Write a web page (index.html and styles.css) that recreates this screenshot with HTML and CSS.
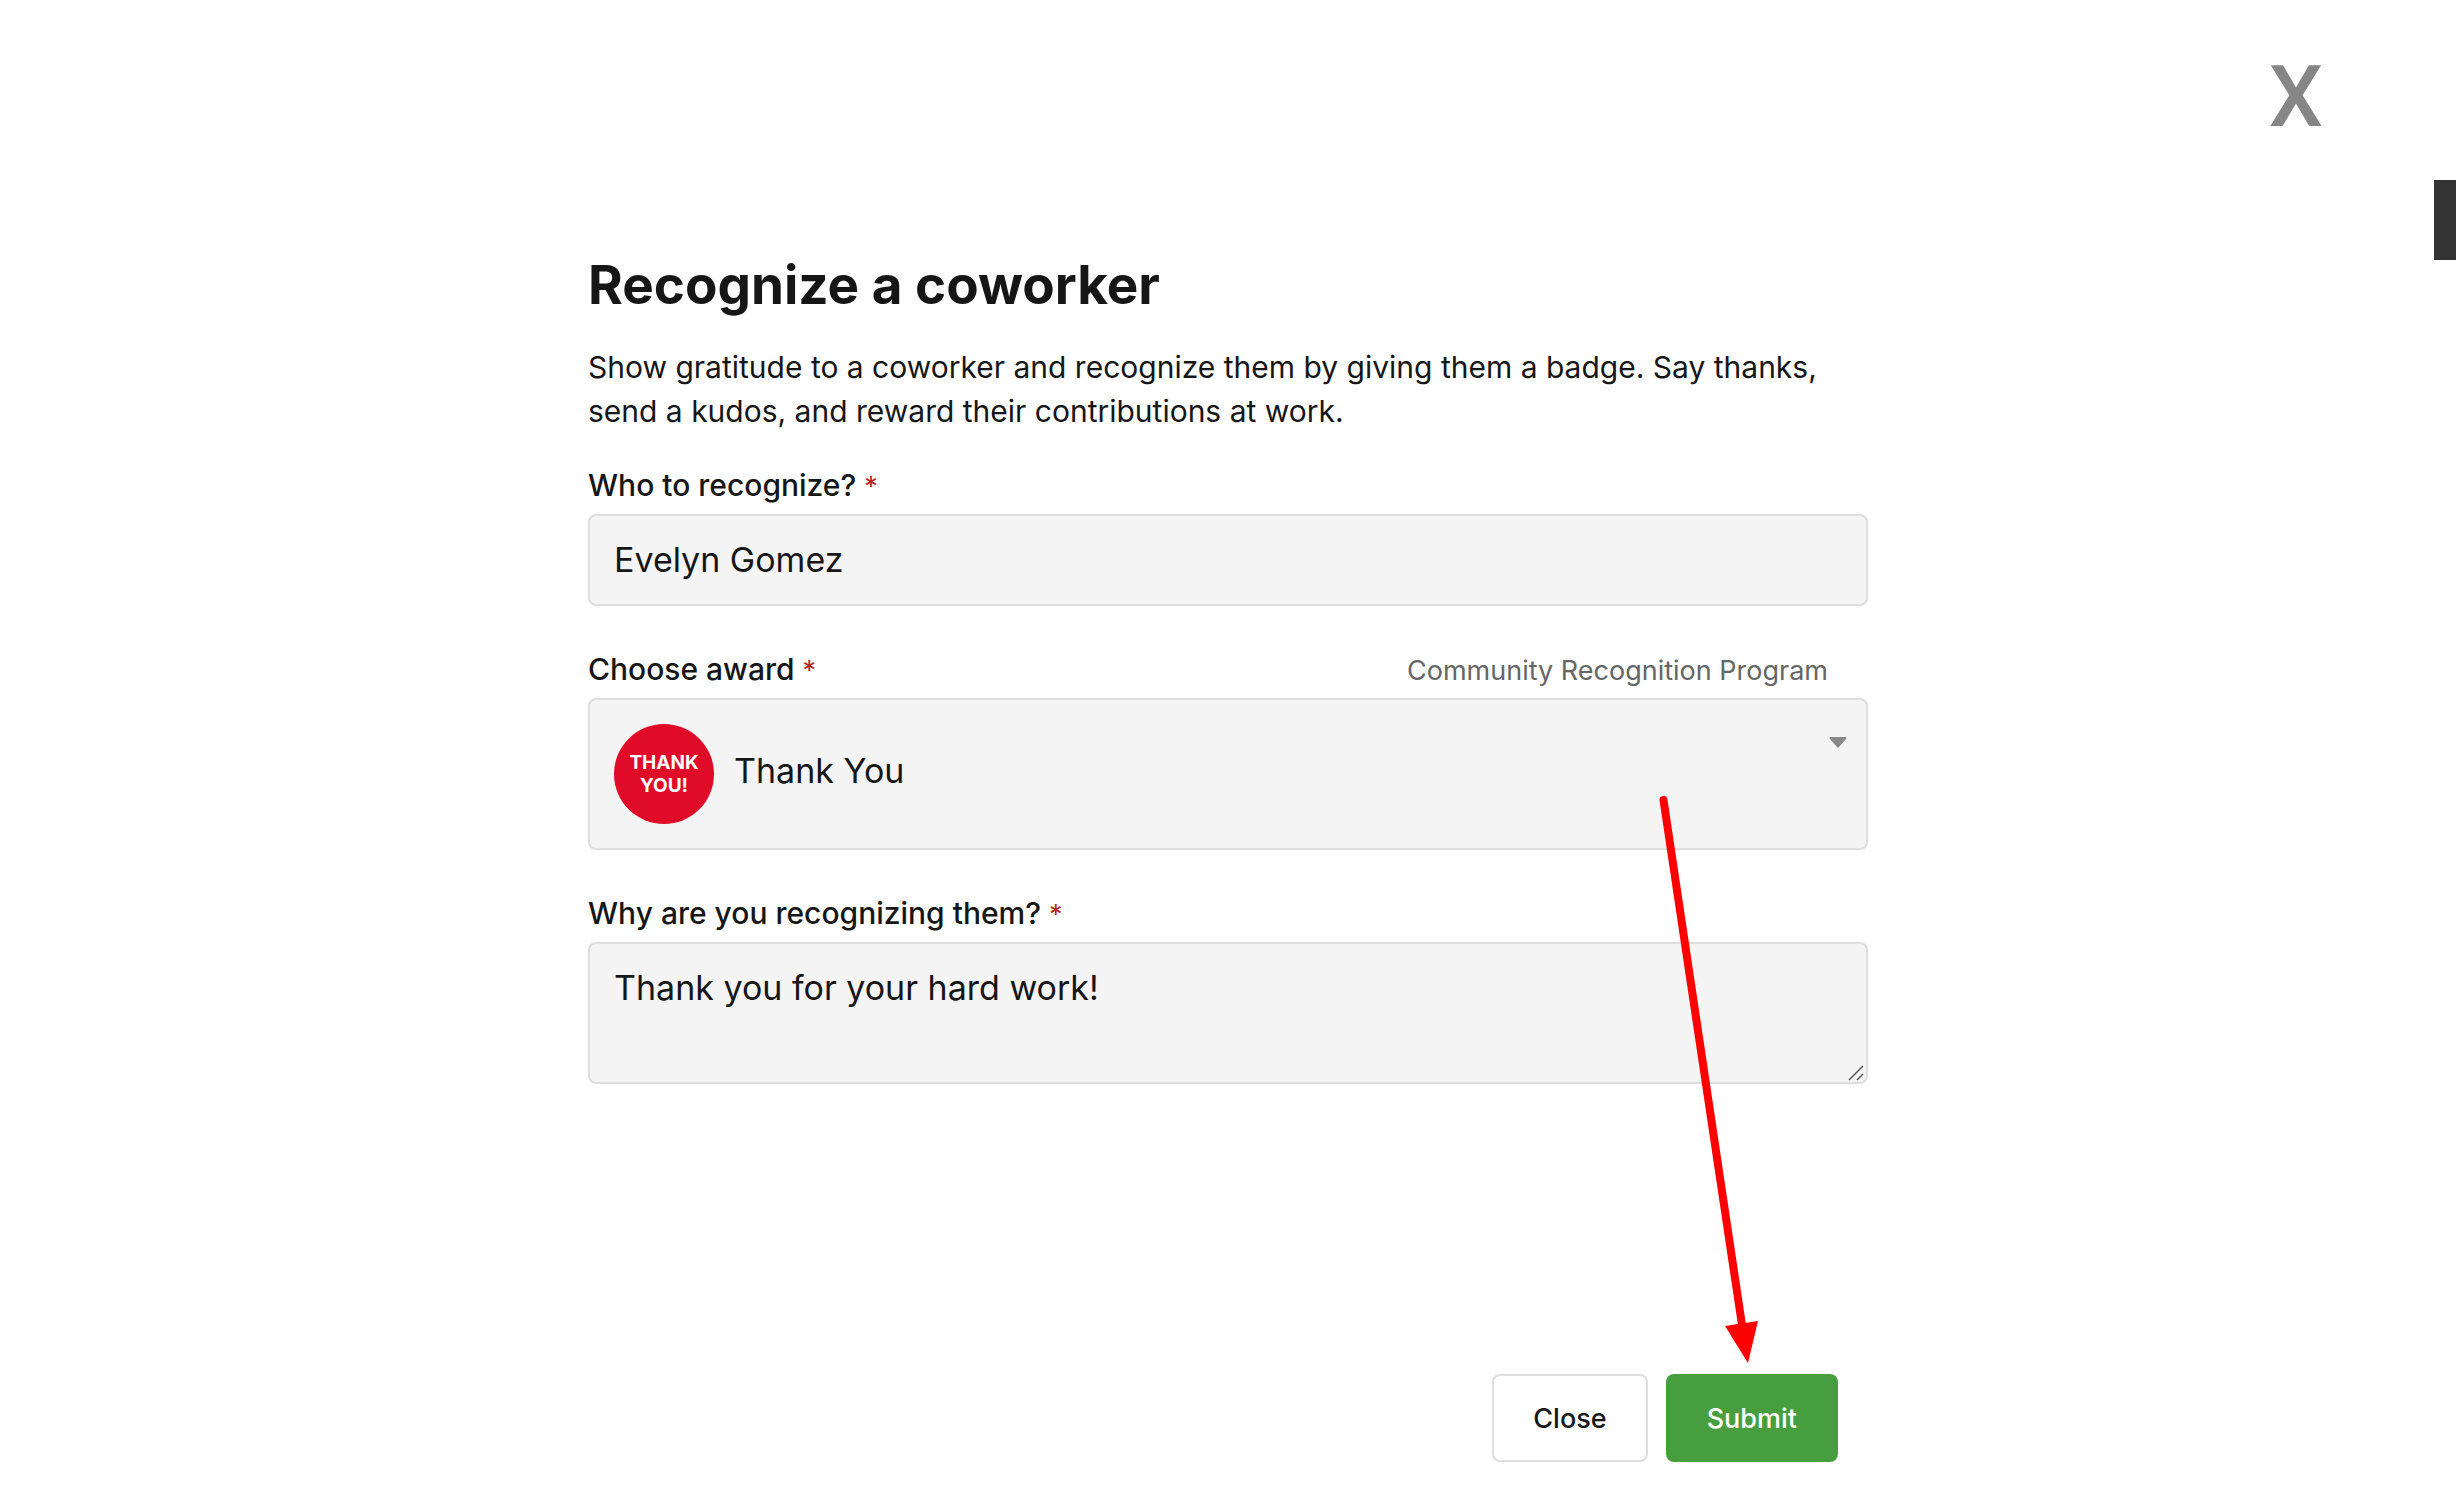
FILE: index.html
```
<!DOCTYPE html>
<html lang="en">
<head>
    <meta charset="UTF-8">
    <meta name="viewport" content="width=device-width, initial-scale=1.0">
    <title>Recognize a coworker</title>
    <link rel="stylesheet" href="styles.css">
</head>
<body>

    <button class="dismiss-btn" type="button">X</button>
    <div class="side-tab"></div>

    <main class="container">
        <h1>Recognize a coworker</h1>
        <p class="intro">Show gratitude to a coworker and recognize them by giving them a badge. Say thanks, send a kudos, and reward their contributions at work.</p>

        <form class="recognize-form">
            <div class="field">
                <div class="label-row">
                    <label for="recipient">Who to recognize? <span class="required">*</span></label>
                </div>
                <input class="control" type="text" id="recipient" value="Evelyn Gomez" required>
            </div>

            <div class="field">
                <div class="label-row">
                    <label for="award">Choose award <span class="required">*</span></label>
                    <span class="program">Community Recognition Program</span>
                </div>
                <div class="award-box">
                    <select class="control award-select" id="award" required>
                        <option>Thank You</option>
                    </select>
                    <div class="badge">THANK<br>YOU!</div>
                    <svg class="caret" width="18" height="12" viewBox="0 0 18 12">
                        <path d="M1.5 1h15L9 9.6z" fill="#888888" stroke="#888888" stroke-width="2" stroke-linejoin="round"/>
                    </svg>
                </div>
            </div>

            <div class="field">
                <div class="label-row">
                    <label for="reason">Why are you recognizing them? <span class="required">*</span></label>
                </div>
                <div class="reason-box">
                    <textarea class="control reason" id="reason" required>Thank you for your hard work!</textarea>
                    <svg class="grip" width="16" height="16" viewBox="0 0 16 16">
                        <path d="M1 15L15 1M9 15l6-6" stroke="#555555" stroke-width="1.5"/>
                    </svg>
                </div>
            </div>

            <div class="actions">
                <button class="btn close-btn" type="button">Close</button>
                <button class="btn submit-btn" type="submit">Submit</button>
                <!-- Arrow pointing at the submit button -->
                <svg class="arrow" width="100" height="568" viewBox="0 0 100 568">
                    <path d="M5.5 5L84 530" stroke="#ff0000" stroke-width="8" stroke-linecap="round"/>
                    <path d="M67 531L100 526 90 568z" fill="#ff0000"/>
                </svg>
            </div>
        </form>
    </main>

</body>
</html>
```
FILE: styles.css
```
* {
    box-sizing: border-box;
}

body {
    font-family: Inter, "Liberation Sans", sans-serif;
    background-color: #ffffff;
    color: #161616;
    margin: 0;
    padding: 251px 40px 30px;
}

.container {
    max-width: 1280px;
    margin: 0 auto;
}

h1 {
    font-size: 53px;
    line-height: 68px;
    font-weight: 700;
    margin: 0 0 26px;
}

.intro {
    font-size: 30px;
    line-height: 44px;
    margin: 0 0 32px;
}

/* Form fields */
.field {
    margin-bottom: 43px;
}

.label-row {
    display: flex;
    justify-content: space-between;
    align-items: baseline;
    height: 40px;
    margin-bottom: 9px;
    padding-right: 40px;
}

label {
    font-size: 30px;
    line-height: 40px;
    font-weight: 500;
}

.required {
    color: #b3261e;
    font-size: 27px;
    font-weight: 400;
    line-height: 1;
}

.program {
    color: #666666;
    font-size: 27px;
    line-height: 40px;
}

.control {
    display: block;
    width: 100%;
    height: 92px;
    padding: 0 24px 2px;
    font-family: inherit;
    font-size: 34px;
    color: inherit;
    background-color: #f4f4f4;
    border: 2px solid #dedede;
    border-radius: 8px;
}

.award-box, .reason-box {
    position: relative;
}

.award-select {
    appearance: none;
    height: 152px;
    padding: 0 60px 8px 144px;
}

.badge {
    position: absolute;
    left: 26px;
    top: 26px;
    display: flex;
    align-items: center;
    justify-content: center;
    width: 100px;
    height: 100px;
    border-radius: 50%;
    background-color: #e00b28;
    color: #ffffff;
    font-size: 19px;
    line-height: 23px;
    font-weight: 700;
    text-align: center;
    pointer-events: none;
}

.caret {
    position: absolute;
    right: 21px;
    top: 39px;
    pointer-events: none;
}

.reason {
    height: 142px;
    padding: 22px 24px;
    line-height: 44px;
    resize: none;
}

.grip {
    position: absolute;
    right: 4px;
    bottom: 3px;
}

/* Buttons */
.actions {
    position: relative;
    display: flex;
    justify-content: flex-end;
    gap: 18px;
    margin-top: 290px;
    padding-right: 30px;
}

.btn {
    height: 88px;
    padding: 0 39px;
    font-family: inherit;
    font-size: 27px;
    font-weight: 500;
    border: 2px solid #dedede;
    border-radius: 8px;
    cursor: pointer;
}

.close-btn {
    background-color: #ffffff;
    color: #161616;
}

.submit-btn {
    background-color: #469e3e;
    border-color: #469e3e;
    color: #ffffff;
}

.arrow {
    position: absolute;
    right: 110px;
    bottom: 99px;
    pointer-events: none;
}

/* Page corner controls */
.dismiss-btn {
    position: absolute;
    right: 133px;
    top: 47px;
    padding: 0;
    font-family: Roboto, sans-serif;
    font-size: 86px;
    font-weight: 500;
    line-height: 100px;
    color: #868686;
    background: none;
    border: none;
    cursor: pointer;
}

.side-tab {
    position: absolute;
    right: 0;
    top: 180px;
    width: 22px;
    height: 80px;
    background-color: #333333;
}
```
